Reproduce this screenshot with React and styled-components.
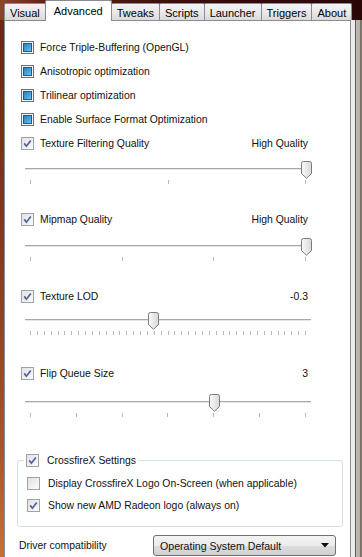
import React from "react";
import styled, { createGlobalStyle } from "styled-components";

const GlobalStyle = createGlobalStyle`
  html, body {
    margin: 0;
    padding: 0;
  }
  body {
    width: 362px;
    height: 557px;
    overflow: hidden;
    font-family: "Liberation Sans", Arial, sans-serif;
    font-size: 10.4px;
    color: #111;
    background: #2a0707;
  }
`;

const Window = styled.div`
  width: 362px;
  height: 557px;
  display: flex;
  flex-direction: column;
  background: linear-gradient(90deg, #8c4526 0px, #6a2514 40px, #3a0d0b 180px, #2a0707 362px);
`;

const TabStrip = styled.div`
  display: flex;
  align-items: flex-end;
  height: 20px;
  padding-left: 4px;
`;

const Tab = styled.div`
  box-sizing: border-box;
  height: ${({ $active }) => ($active ? "21px" : "17px")};
  margin-bottom: ${({ $active }) => ($active ? "-1px" : "0")};
  margin-left: -1px;
  padding: ${({ $active }) => ($active ? "0 8px" : "2px 5px 0")};
  display: flex;
  align-items: center;
  font-size: 11px;
  color: #000;
  border: 1px solid #898c95;
  border-bottom: none;
  border-radius: 2px 2px 0 0;
  background: ${({ $active }) =>
    $active ? "#fff" : "linear-gradient(180deg, #f4f4f4 0%, #e9e9e9 50%, #dadada 100%)"};
  position: relative;
  z-index: ${({ $active }) => ($active ? 1 : 0)};
  &:first-child {
    margin-left: 0;
  }
`;

const Body = styled.div`
  flex: 1;
  display: flex;
  min-height: 0;
`;

const LeftEdge = styled.div`
  width: 4px;
  background: linear-gradient(180deg, #6b2616 0%, #8a3a1c 45%, #a8552a 80%, #c87034 100%);
`;

const RightFrame = styled.div`
  width: 11px;
  background: linear-gradient(
    90deg,
    #ececec 0px, #ececec 4px,
    #5a5a5a 4px, #5a5a5a 5px,
    #c2bcae 5px, #b5ae9f 9px,
    #6e6a63 9px, #8a867e 11px
  );
`;

const Panel = styled.div`
  flex: 1;
  box-sizing: border-box;
  background: #fff;
  border: 1px solid #898c95;
  border-bottom: none;
  padding: 14px 0 0 16px;
  display: flex;
  flex-direction: column;
`;

const Row = styled.div`
  display: flex;
  align-items: center;
  height: ${({ $h }) => $h || 24}px;
  width: 287px;
  margin-top: ${({ $mt }) => $mt || 0}px;
  gap: ${({ $gap }) => $gap || 6}px;
  flex: none;
`;

const Value = styled.span`
  margin-left: auto;
`;

const Box = styled.span`
  flex: none;
  width: 13px;
  height: 13px;
  box-sizing: border-box;
  border: 1px solid ${({ $muted }) => ($muted ? "#a2a2a2" : "#707070")};
  background: ${({ $muted }) =>
    $muted ? "linear-gradient(135deg, #e2e2e2, #fbfbfb)" : "#f2f2f2"};
  display: flex;
  align-items: center;
  justify-content: center;
`;

const Fill = styled.span`
  width: 9px;
  height: 9px;
  box-sizing: border-box;
  border: 1px solid #1d5b8c;
  background: linear-gradient(135deg, #2a7dbb 0%, #4aa5dc 60%, #74c3ea 100%);
`;

const CheckBox = ({ state }) => {
  if (state === "blue") {
    return (
      <Box>
        <Fill />
      </Box>
    );
  }
  return (
    <Box $muted>
      {state === "checked" && (
        <svg width="11" height="11" viewBox="0 0 11 11">
          <path d="M2.2 5.4 L4.4 8.2 L8.8 2.4" fill="none" stroke="#51619a" strokeWidth="1.7" />
        </svg>
      )}
    </Box>
  );
};

const SliderWrap = styled.div`
  position: relative;
  width: 286px;
  height: 23px;
  margin-left: 4px;
  margin-top: ${({ $mt }) => $mt}px;
  flex: none;
`;

const Track = styled.div`
  margin-top: 7px;
  height: 0;
  border-top: 1px solid #a9a9a9;
  border-bottom: 1px solid #e6e6e6;
`;

const Ticks = styled.div`
  display: flex;
  justify-content: space-between;
  margin: 10px 5px 0;
  height: 4px;
`;

const Tick = styled.span`
  width: 1px;
  height: 4px;
  background: #b9b9b9;
`;

const Thumb = styled.svg`
  position: absolute;
  top: 0;
`;

const Slider = ({ ticks, pos, mt }) => (
  <SliderWrap $mt={mt}>
    <Track />
    <Ticks>
      {Array.from({ length: ticks }).map((_, i) => (
        <Tick key={i} />
      ))}
    </Ticks>
    <Thumb width="11" height="18" viewBox="0 0 11 18" style={{ left: pos * 276 - 0.5 }}>
      <defs>
        <linearGradient id="tg" x1="0" y1="0" x2="1" y2="0">
          <stop offset="0" stopColor="#fafafa" />
          <stop offset="1" stopColor="#d8d8d8" />
        </linearGradient>
      </defs>
      <path
        d="M0.5 2.5 Q0.5 0.5 2.5 0.5 H8.5 Q10.5 0.5 10.5 2.5 V12.5 L5.5 17.3 L0.5 12.5 Z"
        fill="url(#tg)"
        stroke="#7b7b7b"
      />
    </Thumb>
  </SliderWrap>
);

const Group = styled.fieldset`
  margin: 36px 0 0 -4px;
  width: 326px;
  box-sizing: border-box;
  border: 1px solid #d5dfe5;
  border-radius: 3px;
  padding: 0 0 10px 6px;
  min-width: 0;
`;

const Legend = styled.legend`
  padding: 0 3px 0 2px;
`;

const GroupRow = styled(Row)`
  margin-left: 3px;
`;

const DriverRow = styled.div`
  display: flex;
  align-items: center;
  height: 21px;
  margin: 8px 0 0 -2px;
`;

const DriverLabel = styled.span`
  width: 134px;
`;

const Select = styled.div`
  box-sizing: border-box;
  width: 183px;
  height: 21px;
  border: 1px solid #707070;
  border-radius: 3px;
  background: linear-gradient(180deg, #f3f3f3 0%, #ebebeb 50%, #dddddd 51%, #d0d0d0 100%);
  display: flex;
  align-items: center;
  padding: 0 6px 0 6px;
`;

const SelectText = styled.span`
  flex: 1;
  font-size: 10.6px;
`;

const sliders = [
  { label: "Texture Filtering Quality", value: "High Quality", ticks: 3, pos: 1, headMt: 0, mt: 6 },
  { label: "Mipmap Quality", value: "High Quality", ticks: 4, pos: 1, headMt: 23, mt: 7 },
  { label: "Texture LOD", value: "-0.3", ticks: 41, pos: 0.448, headMt: 23, mt: 4 },
  { label: "Flip Queue Size", value: "3", ticks: 7, pos: 4 / 6, headMt: 26, mt: 9 },
];

const options = [
  "Force Triple-Buffering (OpenGL)",
  "Anisotropic optimization",
  "Trilinear optimization",
  "Enable Surface Format Optimization",
];

const tabs = ["Visual", "Advanced", "Tweaks", "Scripts", "Launcher", "Triggers", "About"];

export default function App() {
  return (
    <>
      <GlobalStyle />
      <Window>
        <TabStrip>
          {tabs.map((t) => (
            <Tab key={t} $active={t === "Advanced"}>
              {t}
            </Tab>
          ))}
        </TabStrip>
        <Body>
          <LeftEdge />
          <Panel>
            {options.map((o) => (
              <Row key={o}>
                <CheckBox state="blue" />
                <span>{o}</span>
              </Row>
            ))}
            {sliders.map((s) => (
              <React.Fragment key={s.label}>
                <Row $mt={s.headMt}>
                  <CheckBox state="checked" />
                  <span>{s.label}</span>
                  <Value>{s.value}</Value>
                </Row>
                <Slider ticks={s.ticks} pos={s.pos} mt={s.mt} />
              </React.Fragment>
            ))}
            <Group>
              <Legend>
                <Row $h={14} $gap={8} style={{ width: "auto" }}>
                  <CheckBox state="checked" />
                  <span>CrossfireX Settings</span>
                </Row>
              </Legend>
              <GroupRow $h={22} $gap={8} $mt={5}>
                <CheckBox state="off" />
                <span>Display CrossfireX Logo On-Screen (when applicable)</span>
              </GroupRow>
              <GroupRow $h={22} $gap={8}>
                <CheckBox state="checked" />
                <span>Show new AMD Radeon logo (always on)</span>
              </GroupRow>
            </Group>
            <DriverRow>
              <DriverLabel>Driver compatibility</DriverLabel>
              <Select>
                <SelectText>Operating System Default</SelectText>
                <svg width="8" height="5" viewBox="0 0 8 5">
                  <path d="M0 0 H8 L4 4.5 Z" fill="#111" />
                </svg>
              </Select>
            </DriverRow>
          </Panel>
          <RightFrame />
        </Body>
      </Window>
    </>
  );
}
